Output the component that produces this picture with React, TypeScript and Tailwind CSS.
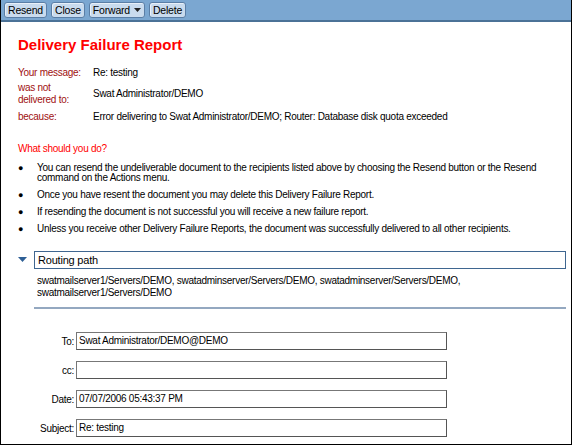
import React from "react";

const bullets = [
  "You can resend the undeliverable document to the recipients listed above by choosing the Resend button or the Resend command on the Actions menu.",
  "Once you have resent the document you may delete this Delivery Failure Report.",
  "If resending the document is not successful you will receive a new failure report.",
  "Unless you receive other Delivery Failure Reports, the document was successfully delivered to all other recipients.",
];

const fields = [
  { label: "To:", value: "Swat Administrator/DEMO@DEMO" },
  { label: "cc:", value: "" },
  { label: "Date:", value: "07/07/2006 05:43:37 PM" },
  { label: "Subject:", value: "Re: testing" },
];

const ToolButton = ({ label, menu }: { label: string; menu?: boolean }) => (
  <button className="flex h-[16px] items-center gap-[4px] rounded-[3px] border border-[#5a7ea6] bg-[#c9dbee] px-[3px] text-[10.5px] leading-none tracking-[-0.2px] text-black shadow-[inset_1px_1px_0_#e8f0f9]">
    {label}
    {menu && (
      <svg width="7" height="4" viewBox="0 0 7 4">
        <path d="M0 0h7L3.5 4z" fill="#222" />
      </svg>
    )}
  </button>
);

export default function App() {
  return (
    <div
      className="flex h-[445px] w-[572px] flex-col overflow-hidden border border-t-0 border-black bg-white text-[10px] tracking-[-0.27px] text-black"
      style={{ fontFamily: "'Liberation Sans', Arial, sans-serif" }}
    >
      <div className="flex h-[22px] shrink-0 items-center gap-[4px] border-b-2 border-[#4b7297] bg-[#7ba7d1] pl-[3px]">
        <ToolButton label="Resend" />
        <ToolButton label="Close" />
        <ToolButton label="Forward" menu />
        <ToolButton label="Delete" />
      </div>

      <div className="flex flex-col pl-[17px] pr-[5px]">
        <h1 className="mt-[14px] text-[15px] font-bold leading-[18px] tracking-normal text-[#ff0000]">
          Delivery Failure Report
        </h1>

        <div className="mt-[13px] grid grid-cols-[75px_1fr] gap-y-[3px] leading-[12px]">
          <div className="text-[#a01010]">Your message:</div>
          <div>Re: testing</div>
          <div className="text-[#a01010]">
            was not
            <br />
            delivered to:
          </div>
          <div className="self-center">Swat Administrator/DEMO</div>
          <div className="mt-[2px] text-[#a01010]">because:</div>
          <div className="mt-[2px]">
            Error delivering to Swat Administrator/DEMO; Router: Database disk quota exceeded
          </div>
        </div>

        <div className="mt-[20px] leading-[12px] text-[#ff0000]">What should you do?</div>
        <ul className="mt-[8px] flex flex-col gap-[7px] leading-[10px]">
          {bullets.map((b) => (
            <li key={b} className="flex">
              <span className="w-[19px] shrink-0 text-[9px]">●</span>
              <span className="pr-[20px]">{b}</span>
            </li>
          ))}
        </ul>

        <div className="mt-[17px] flex items-center">
          <svg width="16" height="8" viewBox="0 0 16 8" className="shrink-0">
            <path d="M0 1h9L4.5 6z" fill="#2e5f95" />
          </svg>
          <div className="h-[18px] flex-1 border border-[#3f6690] pl-[3px] text-[11px] leading-[16px] tracking-[-0.2px]">
            Routing path
          </div>
        </div>
        <div className="ml-[19px] mt-[6px] leading-[12px]">
          swatmailserver1/Servers/DEMO, swatadminserver/Servers/DEMO, swatadminserver/Servers/DEMO,
          <br />
          swatmailserver1/Servers/DEMO
        </div>
        <div className="ml-[16px] mt-[8px] h-[2px] bg-[#94a8c0]" />

        <div className="mt-[23px] flex flex-col gap-[11px]">
          {fields.map((f) => (
            <div key={f.label} className="flex items-center">
              <div className="w-[58px] pr-[2px] text-right">{f.label}</div>
              <div className="h-[18px] w-[371px] border border-[#777] border-b-[#555] border-r-[#555] bg-white pl-[2px] leading-[16px]">
                {f.value}
              </div>
            </div>
          ))}
        </div>
      </div>
    </div>
  );
}
